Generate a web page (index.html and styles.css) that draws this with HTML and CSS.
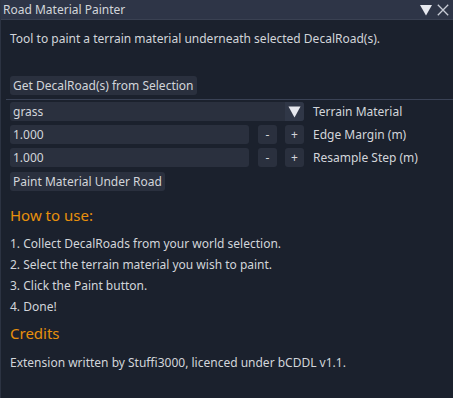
FILE: index.html
```html
<!DOCTYPE html>
<html lang="en">
<head>
  <meta charset="UTF-8">
  <title>Road Material Painter</title>
  <link rel="stylesheet" href="styles.css">
</head>
<body>
  <div class="window">
    <div class="titlebar">
      <span class="title">Road Material Painter</span>
      <span class="title-icons">
        <svg width="12" height="12" viewBox="0 0 12 12"><polygon points="0,1 12,1 6,11.5" fill="#e6e8ee"/></svg>
        <svg width="12" height="12" viewBox="0 0 12 12"><path d="M0.8 0.8 L11.2 11.2 M11.2 0.8 L0.8 11.2" stroke="#c8ccd6" stroke-width="1.3"/></svg>
      </span>
    </div>

    <div class="content">
      <p class="intro">Tool to paint a terrain material underneath selected DecalRoad(s).</p>

      <button class="btn btn-first">Get DecalRoad(s) from Selection</button>
      <div class="separator"></div>

      <div class="row">
        <div class="combo">
          <span>grass</span>
          <span class="combo-arrow">
            <svg width="13" height="12" viewBox="0 0 13 12"><polygon points="0.5,0.5 12.5,0.5 6.5,11.5" fill="#e6e8ee"/></svg>
          </span>
        </div>
        <span class="label">Terrain Material</span>
      </div>

      <div class="row">
        <div class="input">1.000</div>
        <button class="step">-</button>
        <button class="step">+</button>
        <span class="label">Edge Margin (m)</span>
      </div>

      <div class="row">
        <div class="input">1.000</div>
        <button class="step">-</button>
        <button class="step">+</button>
        <span class="label">Resample Step (m)</span>
      </div>

      <button class="btn btn-paint">Paint Material Under Road</button>

      <h3 class="howto">How to use:</h3>
      <ol class="steps">
        <li>1. Collect DecalRoads from your world selection.</li>
        <li>2. Select the terrain material you wish to paint.</li>
        <li>3. Click the Paint button.</li>
        <li>4. Done!</li>
      </ol>

      <h3 class="credits-title">Credits</h3>
      <p class="credits">Extension written by Stuffi3000, licenced under bCDDL v1.1.</p>
    </div>
  </div>
</body>
</html>
```

FILE: styles.css
```css
:root {
  --bg-color: #1b212d;
  --title-color: #2e3547;
  --widget-color: #2a303e;
  --text-color: #d2d5da;
  --accent-color: #e8900c;
}

* {
  box-sizing: border-box;
}

body {
  margin: 0;
  width: 453px;
  height: 398px;
  background: var(--bg-color);
  font-family: "Noto Sans", "Open Sans", sans-serif;
  font-size: 12px;
  color: var(--text-color);
  overflow: hidden;
}

.window {
  height: 398px;
  border-left: 1px solid #2c3342;
}

.titlebar {
  height: 20px;
  background: var(--title-color);
  border-bottom: 1px solid #3a4152;
  display: flex;
  align-items: center;
  justify-content: space-between;
  padding: 0 4px 0 2px;
}

.title {
  font-size: 12px;
  line-height: 19px;
}

.title-icons {
  display: flex;
  align-items: center;
  gap: 5px;
}

.content {
  padding: 0 9px;
}

.intro {
  margin: 10px 0 0;
  line-height: 18px;
}

.btn {
  display: block;
  font-family: inherit;
  font-size: 12px;
  color: var(--text-color);
  background: var(--widget-color);
  border: none;
  border-radius: 3px;
  height: 19px;
  padding: 0 3px;
  line-height: 19px;
}

.btn-first {
  margin-top: 28px;
}

.btn-paint {
  margin-top: 5px;
}

.separator {
  height: 1px;
  background: #3a4255;
  margin: 4px -9px 2px -4px;
}

.row {
  display: flex;
  align-items: center;
  height: 19px;
  margin-bottom: 4px;
}

.row:last-of-type {
  margin-bottom: 0;
}

.combo {
  width: 294px;
  height: 19px;
  background: var(--widget-color);
  border-radius: 3px;
  display: flex;
  justify-content: space-between;
  align-items: center;
  padding-left: 3px;
}

.combo-arrow {
  width: 19px;
  height: 19px;
  background: #303747;
  border-radius: 0 3px 3px 0;
  display: flex;
  align-items: center;
  justify-content: center;
}

.input {
  width: 239px;
  height: 19px;
  background: var(--widget-color);
  border-radius: 3px;
  padding-left: 3px;
  line-height: 19px;
}

.step {
  width: 19px;
  height: 19px;
  margin-left: 9px;
  padding: 0;
  border: none;
  border-radius: 3px;
  background: var(--widget-color);
  color: var(--text-color);
  font-family: inherit;
  font-size: 12px;
}

.row .step + .step {
  margin-left: 8px;
}

.label {
  margin-left: 9px;
}

h3 {
  font-weight: normal;
  font-size: 15px;
  color: var(--accent-color);
  line-height: 22px;
}

.howto {
  margin: 13px 0 0;
}

.credits-title {
  margin: 5px 0 0;
}

.steps {
  list-style: none;
  margin: 7px 0 0;
  padding: 0;
}

.steps li {
  line-height: 21px;
}

.credits {
  margin: 10px 0 0;
  line-height: 18px;
}
```
